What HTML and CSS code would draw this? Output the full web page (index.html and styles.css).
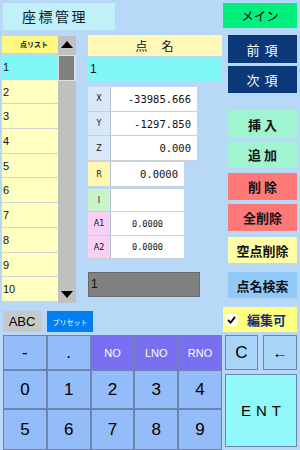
FILE: index.html
```html
<!DOCTYPE html>
<html lang="ja">

    <head>
        <meta charset="UTF-8">
        <meta name="viewport" content="width=device-width, initial-scale=1.0">
        <title>座標管理</title>
        <link rel="stylesheet" href="styles.css">
    </head>

    <body>
        <div class="screen">
            <header class="top">
                <div class="title">座標管理</div>
                <button class="btn-main">メイン</button>
            </header>

            <main class="body">
                <section class="list">
                    <div class="list-items">
                        <div class="list-head">点リスト</div>
                        <div class="list-row selected">1</div>
                        <div class="list-row">2</div>
                        <div class="list-row">3</div>
                        <div class="list-row">4</div>
                        <div class="list-row">5</div>
                        <div class="list-row">6</div>
                        <div class="list-row">7</div>
                        <div class="list-row">8</div>
                        <div class="list-row">9</div>
                        <div class="list-row">10</div>
                    </div>
                    <div class="scroll">
                        <div class="scroll-btn">
                            <svg width="12" height="7" viewBox="0 0 12 7"><polygon points="0,7 6,0 12,7" fill="#000"/></svg>
                        </div>
                        <div class="scroll-track">
                            <div class="scroll-thumb"></div>
                        </div>
                        <div class="scroll-btn">
                            <svg width="12" height="7" viewBox="0 0 12 7"><polygon points="0,0 12,0 6,7" fill="#000"/></svg>
                        </div>
                    </div>
                </section>

                <section class="fields">
                    <div class="name-head">点　名</div>
                    <div class="name-input">1</div>

                    <div class="coords">
                        <div class="field"><span class="lbl lbl-xyz">X</span><span class="val">-33985.666</span></div>
                        <div class="field"><span class="lbl lbl-xyz">Y</span><span class="val">-1297.850</span></div>
                        <div class="field"><span class="lbl lbl-xyz">Z</span><span class="val">0.000</span></div>
                    </div>

                    <div class="params">
                        <div class="field f-r"><span class="lbl lbl-r">R</span><span class="val">0.0000</span></div>
                        <div class="field f-i"><span class="lbl lbl-i">I</span><span class="val"></span></div>
                        <div class="field f-a1"><span class="lbl lbl-a">A1</span><span class="val small">0.0000</span></div>
                        <div class="field f-a2"><span class="lbl lbl-a">A2</span><span class="val small">0.0000</span></div>
                    </div>

                    <div class="gray-input">1</div>
                </section>

                <section class="actions">
                    <button class="act nav a-prev">前 項</button>
                    <button class="act nav a-next">次 項</button>
                    <button class="act mint a-ins">挿 入</button>
                    <button class="act mint a-add">追 加</button>
                    <button class="act red a-del">削 除</button>
                    <button class="act red a-delall">全削除</button>
                    <button class="act yellow a-empty">空点削除</button>
                    <button class="act blue a-search">点名検索</button>
                </section>
            </main>

            <div class="toolbar">
                <button class="btn-abc">ABC</button>
                <button class="btn-preset">プリセット</button>
                <div class="edit-toggle">
                    <span class="check">
                        <svg width="9" height="8" viewBox="0 0 10 9"><polyline points="1,4.5 4,7.5 9,1" fill="none" stroke="#000" stroke-width="2"/></svg>
                    </span>
                    <span class="edit-text">編集可</span>
                </div>
            </div>

            <div class="keys">
                <div class="numpad">
                    <button class="key">-</button>
                    <button class="key">.</button>
                    <button class="key fn">NO</button>
                    <button class="key fn">LNO</button>
                    <button class="key fn">RNO</button>
                    <button class="key">0</button>
                    <button class="key">1</button>
                    <button class="key">2</button>
                    <button class="key">3</button>
                    <button class="key">4</button>
                    <button class="key">5</button>
                    <button class="key">6</button>
                    <button class="key">7</button>
                    <button class="key">8</button>
                    <button class="key">9</button>
                </div>
                <div class="side-keys">
                    <div class="side-top">
                        <button class="key side k-c">C</button>
                        <button class="key side k-back">←</button>
                    </div>
                    <button class="key ent">ENT</button>
                </div>
            </div>
        </div>
    </body>

</html>
```

FILE: styles.css
```css
body {
    margin: 0;
    background-color: #b8d8f8;
    font-family: "Noto Sans CJK JP", "Liberation Sans", sans-serif;
    color: #111;
}

button {
    font-family: inherit;
    border: none;
    padding: 0;
    margin: 0;
    cursor: pointer;
}

.screen {
    width: 300px;
    height: 450px;
    overflow: hidden;
}

/* top bar */
.top {
    display: flex;
    justify-content: space-between;
    align-items: flex-start;
    height: 35px;
    padding: 3px 3px 0 3px;
    box-sizing: border-box;
}

.title {
    width: 112px;
    height: 27px;
    background: #c0f0f8;
    box-sizing: border-box;
    padding-left: 19px;
    font-size: 14px;
    letter-spacing: 2.5px;
    line-height: 27px;
    color: #0a1a28;
}

.btn-main {
    width: 74px;
    height: 25px;
    background: #00f080;
    font-size: 12.5px;
    color: #000;
}

/* middle */
.body {
    display: flex;
    height: 270px;
}

.list {
    display: flex;
    margin-left: 2px;
    margin-top: 1px;
    width: 74px;
    height: 267px;
}

.list-items {
    width: 56px;
    display: flex;
    flex-direction: column;
}

.list-head {
    height: 17px;
    margin-bottom: 2px;
    background: #fff880;
    font-size: 7px;
    font-weight: bold;
    text-align: right;
    padding-right: 10px;
    line-height: 17px;
}

.list-row {
    height: 24.7px;
    box-sizing: border-box;
    background: #ffffc0;
    border-bottom: 1px solid #d4d4d4;
    font-family: "Liberation Sans", sans-serif;
    font-size: 11px;
    line-height: 24px;
    padding-left: 1px;
}

.list-row.selected {
    background: #80f8f8;
}

.scroll {
    width: 18px;
    background: #c0c0c0;
    display: flex;
    flex-direction: column;
}

.scroll-btn {
    height: 17px;
    display: flex;
    align-items: center;
    justify-content: center;
}

.scroll-track {
    flex: 1;
    padding-top: 2px;
}

.scroll-thumb {
    height: 24px;
    background: #808080;
    border: 1px solid #e0e0e0;
    border-right-width: 2px;
}

.fields {
    margin-left: 12px;
    width: 134px;
    display: flex;
    flex-direction: column;
}

.name-head {
    height: 21px;
    background: #fff8b8;
    text-align: center;
    font-size: 12px;
    line-height: 21px;
    letter-spacing: 1px;
}

.name-input {
    height: 24px;
    margin-top: 1px;
    background: #80f8f8;
    font-family: "Liberation Sans", sans-serif;
    font-size: 12px;
    line-height: 24px;
    padding-left: 2px;
}

.coords {
    margin-top: 6px;
    width: 109px;
}

.coords .field {
    height: 24.7px;
}

.field {
    display: flex;
    box-sizing: border-box;
    background: #fff;
    border-bottom: 1px solid #c8d0d8;
}

.lbl {
    width: 22px;
    flex: none;
    display: flex;
    align-items: center;
    justify-content: center;
    font-family: "DejaVu Sans", sans-serif;
    font-size: 8px;
    border-right: 1px solid #b0c0d0;
}

.lbl-xyz {
    background: #d8e8f8;
}

.lbl-r {
    background: #fff8b0;
}

.lbl-i {
    background: #c8f4c8;
}

.lbl-a {
    background: #f8d0f4;
}

.val {
    flex: 1;
    padding-right: 6px;
    font-family: "DejaVu Sans Mono", monospace;
    font-size: 10.5px;
    display: flex;
    align-items: center;
    justify-content: flex-end;
}

.val.small {
    justify-content: center;
    font-size: 8.6px;
    padding-right: 0;
}

.params {
    margin-top: 1px;
    width: 96px;
}

.f-r {
    height: 25px;
    margin-bottom: 2px;
}

.f-i {
    height: 23px;
}

.f-a1 {
    height: 24px;
}

.f-a2 {
    height: 23px;
}

.gray-input {
    margin-top: 13px;
    width: 112px;
    height: 25px;
    box-sizing: border-box;
    background: #808080;
    border: 1px solid #6a6a6a;
    font-family: "Liberation Sans", sans-serif;
    font-size: 12px;
    line-height: 23px;
    padding-left: 2px;
}

.actions {
    margin-left: 6px;
    width: 69px;
    display: flex;
    flex-direction: column;
}

.act {
    height: 27px;
    font-size: 13px;
    font-weight: bold;
    color: #111;
}

.nav {
    background: #0a3878;
    color: #fff;
    font-weight: normal;
    letter-spacing: 1px;
}

.mint {
    background: #a0f4d0;
}

.red {
    background: #ff7878;
}

.yellow {
    background: #ffffa8;
}

.blue {
    background: #90c8f8;
}

.a-prev { height: 28px; }
.a-next { margin-top: 3px; }
.a-ins { margin-top: 17px; height: 28px; }
.a-add { margin-top: 3px; }
.a-del { margin-top: 5px; }
.a-delall { margin-top: 4px; }
.a-empty { margin-top: 6px; height: 26px; }
.a-search { margin-top: 9px; height: 26px; }

/* toolbar */
.toolbar {
    display: flex;
    align-items: flex-start;
    height: 30px;
    padding-left: 3px;
}

.btn-abc {
    margin-top: 6px;
    width: 38px;
    height: 21px;
    background: #c8c8c8;
    font-family: "Liberation Sans", sans-serif;
    font-size: 13px;
}

.btn-preset {
    margin-top: 6px;
    margin-left: 6px;
    width: 46px;
    height: 21px;
    background: #0080f0;
    color: #fff;
    font-size: 7px;
}

.edit-toggle {
    margin-top: 2px;
    margin-left: auto;
    margin-right: 3px;
    width: 74px;
    height: 25px;
    background: #ffff80;
    display: flex;
    align-items: center;
}

.check {
    width: 12px;
    height: 12px;
    margin-left: 2px;
    background: #fff;
    display: flex;
    align-items: center;
    justify-content: center;
}

.edit-text {
    margin-left: 10px;
    font-size: 13px;
    font-weight: bold;
    color: #1a2a80;
}

/* keypad */
.keys {
    display: flex;
    height: 115px;
    padding-left: 3px;
}

.numpad {
    width: 219px;
    display: grid;
    grid-template-columns: repeat(5, 1fr);
    grid-template-rows: 35px 39px 41px;
}

.key {
    box-sizing: border-box;
    border: 1px solid #6e84b0;
    background: #94bcf8;
    font-family: "Liberation Sans", sans-serif;
    font-size: 17px;
    color: #000;
}

.key.fn {
    background: #7870f0;
    color: #fff;
    font-size: 11px;
}

.side-keys {
    margin-left: 3px;
    width: 72px;
    display: flex;
    flex-direction: column;
}

.side-top {
    display: flex;
    justify-content: space-between;
}

.side {
    height: 35px;
    background: #a8d4f8;
    font-size: 17px;
}

.k-c {
    width: 33px;
}

.k-back {
    width: 34px;
    font-size: 15px;
}

.ent {
    margin-top: 4px;
    height: 73px;
    background: #90f8f8;
    font-size: 15px;
    letter-spacing: 5px;
    padding-left: 5px;
}
```
